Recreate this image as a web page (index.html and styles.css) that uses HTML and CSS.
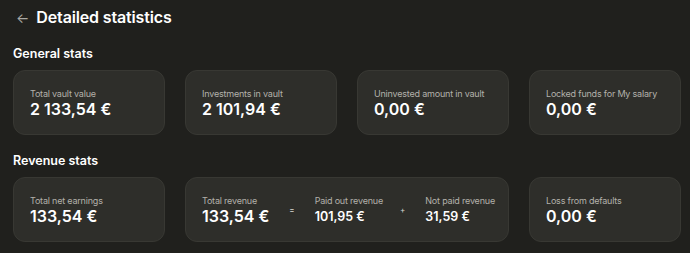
FILE: index.html
```html
<!DOCTYPE html>
<html lang="en">
<head>
    <meta charset="UTF-8">
    <meta name="viewport" content="width=device-width, initial-scale=1.0">
    <title>Detailed statistics</title>
    <link rel="stylesheet" href="styles.css">
</head>
<body>
    <div class="page">
        <div class="header">
            <span class="back">&larr;</span>
            <h1>Detailed statistics</h1>
        </div>

        <h2>General stats</h2>
        <div class="grid">
            <div class="card">
                <div class="label">Total vault value</div>
                <div class="value">2 133,54 €</div>
            </div>
            <div class="card">
                <div class="label">Investments in vault</div>
                <div class="value">2 101,94 €</div>
            </div>
            <div class="card">
                <div class="label">Uninvested amount in vault</div>
                <div class="value">0,00 €</div>
            </div>
            <div class="card">
                <div class="label">Locked funds for My salary</div>
                <div class="value">0,00 €</div>
            </div>
        </div>

        <h2 class="second">Revenue stats</h2>
        <div class="grid">
            <div class="card">
                <div class="label">Total net earnings</div>
                <div class="value">133,54 €</div>
            </div>
            <div class="card wide">
                <div class="part">
                    <div class="label">Total revenue</div>
                    <div class="value">133,54 €</div>
                </div>
                <span class="op">=</span>
                <div class="part">
                    <div class="label">Paid out revenue</div>
                    <div class="value small">101,95 €</div>
                </div>
                <span class="op plus">+</span>
                <div class="part">
                    <div class="label">Not paid revenue</div>
                    <div class="value small">31,59 €</div>
                </div>
            </div>
            <div class="card">
                <div class="label">Loss from defaults</div>
                <div class="value">0,00 €</div>
            </div>
        </div>
    </div>
</body>
</html>
```
FILE: styles.css
```css
body {
    font-family: 'Inter', 'Noto Sans', sans-serif;
    background-color: #20201d;
    color: #fff;
    margin: 0;
    padding: 0;
}
.page {
    padding: 5px 8px 0 13px;
}
.header {
    display: flex;
    align-items: center;
    height: 24px;
}
.back {
    color: #a9a8a2;
    font-size: 14px;
    margin: 0 7px 0 3px;
}
h1 {
    font-size: 16px;
    font-weight: 600;
    line-height: 24px;
    letter-spacing: -0.15px;
    margin: 0;
}
h2 {
    font-size: 12.5px;
    font-weight: 600;
    line-height: 16px;
    margin: 17px 0 8px;
}
h2.second {
    margin-top: 18px;
}
.grid {
    display: grid;
    grid-template-columns: repeat(4, 152px);
    column-gap: 20px;
}
.card {
    background-color: #2e2e2a;
    border: 1px solid #383833;
    border-radius: 12px;
    height: 65px;
    box-sizing: border-box;
    padding: 0 16px;
    display: flex;
    flex-direction: column;
    justify-content: center;
}
.card.wide {
    grid-column: span 2;
    flex-direction: row;
    align-items: center;
    justify-content: flex-start;
}
.label {
    font-size: 9px;
    letter-spacing: -0.2px;
    color: #b3b1aa;
    line-height: 12px;
    white-space: nowrap;
}
.value {
    font-size: 16px;
    font-weight: 600;
    line-height: 18px;
    white-space: nowrap;
}
.value.small {
    font-size: 12.5px;
    line-height: 16px;
    margin-top: 2px;
}
.op {
    font-size: 8px;
    color: #d8d7d2;
    margin: 0 20px;
}
.op.plus {
    margin-left: 17px;
}
```
